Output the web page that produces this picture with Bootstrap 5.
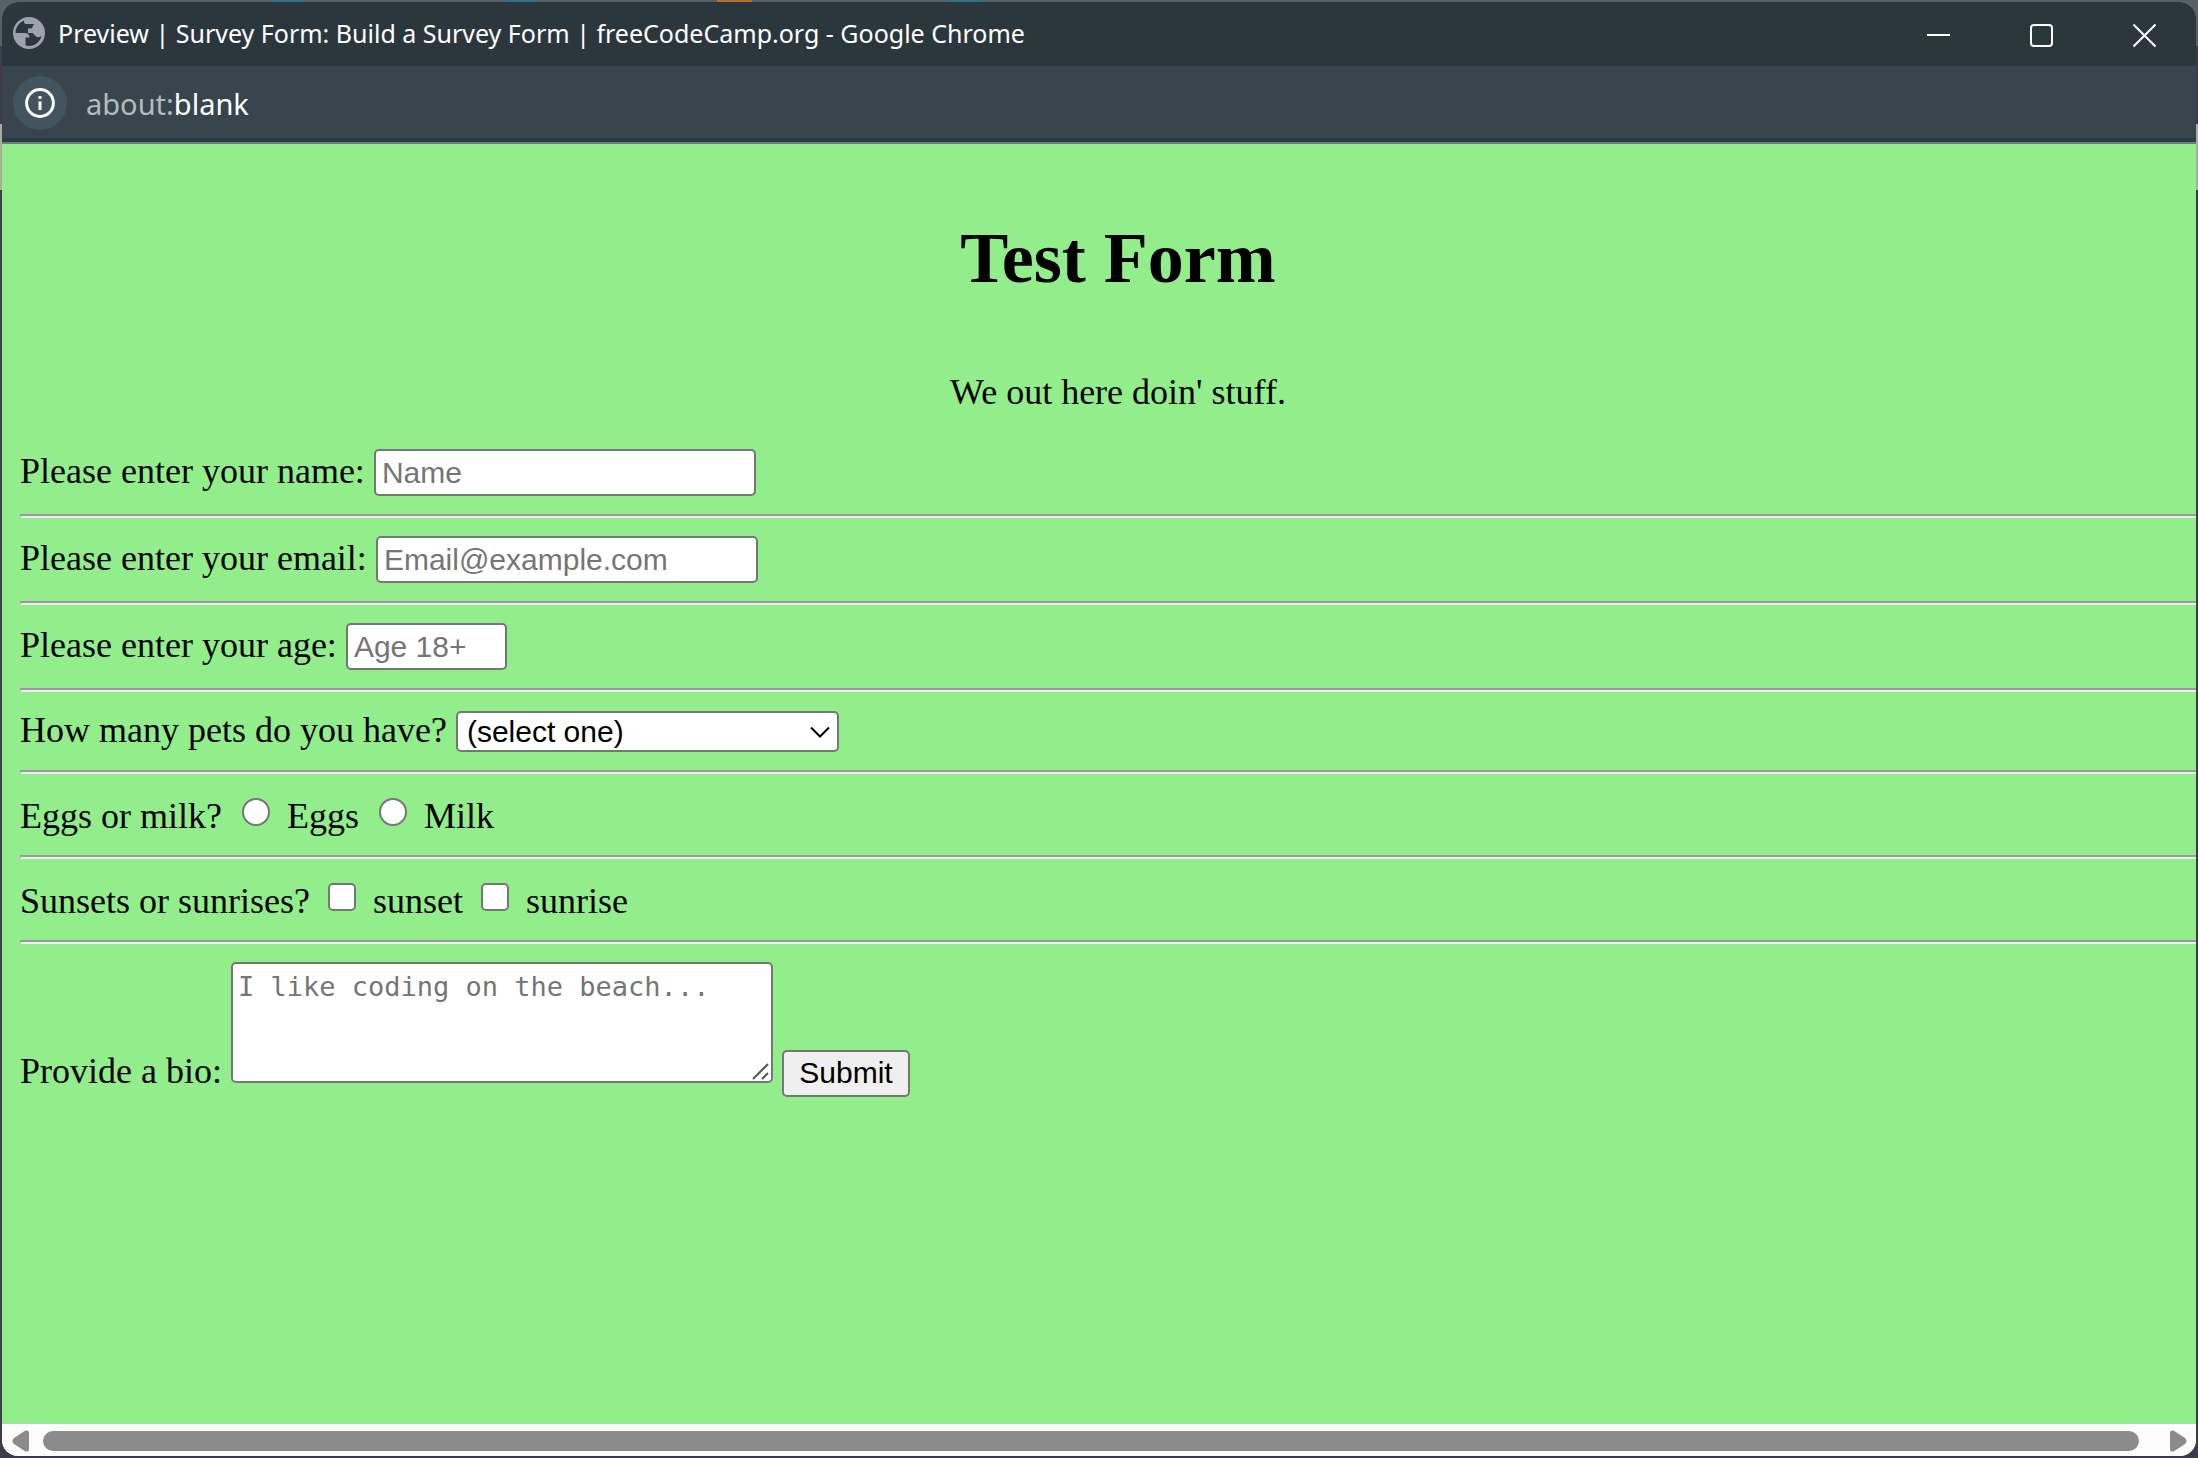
<!DOCTYPE html>
<html lang="en">
<head>
<meta charset="utf-8">
<meta name="viewport" content="width=device-width, initial-scale=1">
<title>Preview | Survey Form: Build a Survey Form | freeCodeCamp.org</title>
<link rel="stylesheet" href="https://cdn.jsdelivr.net/npm/bootstrap@5.3.0/dist/css/bootstrap.min.css">
<style>
html{background:#3d3a4b}
body{background:linear-gradient(90deg,transparent 272px,#2f7285 272px 304px,transparent 304px 505px,#2f7285 505px 536px,transparent 536px 717px,#b06f35 717px 752px,transparent 752px 947px,#2f7285 947px 981px,transparent 981px) top/100% 2px no-repeat,linear-gradient(#566066 0 46px,#3d3a4b 46px 124px,#a9aca3 124px 190px,#3d3a4b 190px);padding:2px;color:#000}
.win{border-radius:16px;background:#92ee8b}
.titlebar{height:64px;background:#2c373d;color:#fff;font:25px "Noto Sans","Open Sans",sans-serif;padding:0 0 2px 10px}
.titlebar .caption{margin-left:12px}
.winbtn{width:103px;height:62px;background:none;border:0;color:#fff}
.addressbar{height:78px;background:#39454c;border-bottom:2px solid #6f7b82;box-shadow:inset 0 -4px #2f3b42;padding:0 0 2px 11px;font:29px "Noto Sans","Open Sans",sans-serif;color:#b5babd}
.addressbar b{color:#fff;font-weight:400}
.info{width:54px;height:54px;background:#42545e;border:0;color:#fff;margin-right:19px}
.pane{font:36px/41px "Liberation Serif","Times New Roman",serif}
.sheet{margin:0 -20px 0 18px;padding-top:73px}
.sheet h1{font-size:72px;line-height:83px;font-weight:700;margin-bottom:72px}
.sheet p{margin-bottom:36px}
.sheet hr{margin:18px 0;border:2px solid;border-color:#9a9a9a #eee #eee #9a9a9a;border-width:2px 0 2px 1px;height:4px;opacity:1}
.field{min-height:45px}
.choice{padding-top:4px}
.box{font:30px "Liberation Sans",Arial,sans-serif;border:2px solid #767676;border-radius:5px;background-color:#fff;color:#000;padding:2px 6px;height:47px;width:382px}
.box::placeholder{color:#757575;opacity:1}
.age{width:161px}
.pick{appearance:none;height:41px;width:383px;padding:0 9px;background:#fff url("data:image/svg+xml,%3Csvg xmlns='http://www.w3.org/2000/svg' width='20' height='12' fill='none' stroke='black' stroke-width='2'%3E%3Cpath d='M1 1.5l9 9 9-9'/%3E%3C/svg%3E") no-repeat right 7px center}
.tick{appearance:none;width:28px;height:28px;border:2px solid #767676;background:#fff;border-radius:5px;margin:0 8px 0 9px;vertical-align:2px}
.tick[type=radio]{border-radius:50%;margin-left:11px}
.tick:checked{background:#0075ff}
.bio{font-family:"DejaVu Sans Mono",monospace;font-size:27px;line-height:35px;width:542px;height:121px;padding:5px;resize:none;vertical-align:baseline;background:#fff url("data:image/svg+xml,%3Csvg xmlns='http://www.w3.org/2000/svg' width='18' height='18' fill='none' stroke='%23555' stroke-width='2'%3E%3Cpath d='M1 17L16 2M10 17l6-6'/%3E%3C/svg%3E") no-repeat right 1px bottom 1px}
.send{width:128px;background:#efefef;padding:0}
.scroller{height:32px;background:#fcfcfc;padding:2px 9px 0 10px}
.thumb{height:20px;background:#8b8b8b;border-radius:10px;margin:0 31px 0 14px}
</style>
<script src="https://cdn.jsdelivr.net/npm/bootstrap@5.3.0/dist/js/bootstrap.bundle.min.js"></script>
</head>
<body class="vh-100">
<div class="win d-flex flex-column h-100 overflow-hidden">
  <header class="titlebar d-flex align-items-center flex-shrink-0">
    <svg width="34" height="34" viewBox="0 0 34 34"><circle cx="17" cy="17" r="16" fill="#9da3ae"/><path d="M12 4.500C7 6.500 3.500 11.500 3.500 17h9c3.500 0 5 1.800 5 4.500h-4v7.500c1 .8 2.300 1 3.500 1 6.500 0 11-4.500 12.500-10-1.500 1.300-4 1.500-5.500.5-1.800-1-2-3.500-4-3.500h-4v-4.500h3.500c2-1 .5-3.500 3-4.500h-8.500c-1.700 0-2-1.500-2-3.500z" fill="#2c373d"/></svg>
    <span class="caption text-nowrap flex-grow-1">Preview | Survey Form: Build a Survey Form | freeCodeCamp.org - Google Chrome</span>
    <button class="winbtn" aria-label="Minimize"><svg width="24" height="24" stroke="#fff" stroke-width="2"><path d="M0 11h23"/></svg></button>
    <button class="winbtn" aria-label="Maximize"><svg width="24" height="24" fill="none" stroke="#fff" stroke-width="2"><rect x="1" y="1" width="21" height="21" rx="3"/></svg></button>
    <button class="winbtn" aria-label="Close"><svg width="24" height="24" stroke="#fff" stroke-width="2"><path d="M.5.5l22 22m0-22l-22 22"/></svg></button>
  </header>
  <div class="addressbar d-flex align-items-center flex-shrink-0">
    <button class="info rounded-circle p-0 d-flex align-items-center justify-content-center" aria-label="Site information"><svg width="30" height="30" fill="none" stroke="#fff" stroke-width="3"><circle cx="15" cy="15" r="13.400"/><path d="M15 13.500v8.500M15 8v3"/></svg></button>
    <span>about:<b>blank</b></span>
  </div>
  <main class="pane flex-grow-1 overflow-hidden">
    <form class="sheet" onsubmit="return false">
      <h1 class="text-center">Test Form</h1>
      <p class="text-center">We out here doin' stuff.</p>
      <div class="field"><label for="name">Please enter your name:</label> <input class="box" id="name" type="text" placeholder="Name"></div>
      <hr>
      <div class="field"><label for="email">Please enter your email:</label> <input class="box" id="email" type="email" placeholder="Email@example.com"></div>
      <hr>
      <div class="field"><label for="age">Please enter your age:</label> <input class="box age" id="age" type="number" min="18" placeholder="Age 18+"></div>
      <hr>
      <div><label for="pets">How many pets do you have?</label> <select class="box pick" id="pets"><option>(select one)</option></select></div>
      <hr>
      <div class="field choice">Eggs or milk? <input class="tick" type="radio" name="food" id="eggs"> <label for="eggs">Eggs</label> <input class="tick" type="radio" name="food" id="milk"> <label for="milk">Milk</label></div>
      <hr>
      <div class="field choice">Sunsets or sunrises? <input class="tick" type="checkbox" id="sunset"> <label for="sunset">sunset</label> <input class="tick" type="checkbox" id="sunrise"> <label for="sunrise">sunrise</label></div>
      <hr>
      <div class="field"><label for="bio">Provide a bio:</label> <textarea class="box bio" id="bio" placeholder="I like coding on the beach..."></textarea> <button class="box send" type="submit">Submit</button></div>
    </form>
  </main>
  <div class="scroller d-flex align-items-center flex-shrink-0">
    <svg width="17" height="22" fill="#8b8b8b"><path d="M13.500.5Q17 0 17 3v16q0 3-3.500 2.500L2 14Q-1 11 2 8z"/></svg>
    <div class="thumb flex-grow-1"></div>
    <svg width="17" height="22" fill="#8b8b8b"><path d="M3.500.5Q0 0 0 3v16q0 3 3.500 2.500L15 14q3-3 0-6z"/></svg>
  </div>
</div>
</body>
</html>
